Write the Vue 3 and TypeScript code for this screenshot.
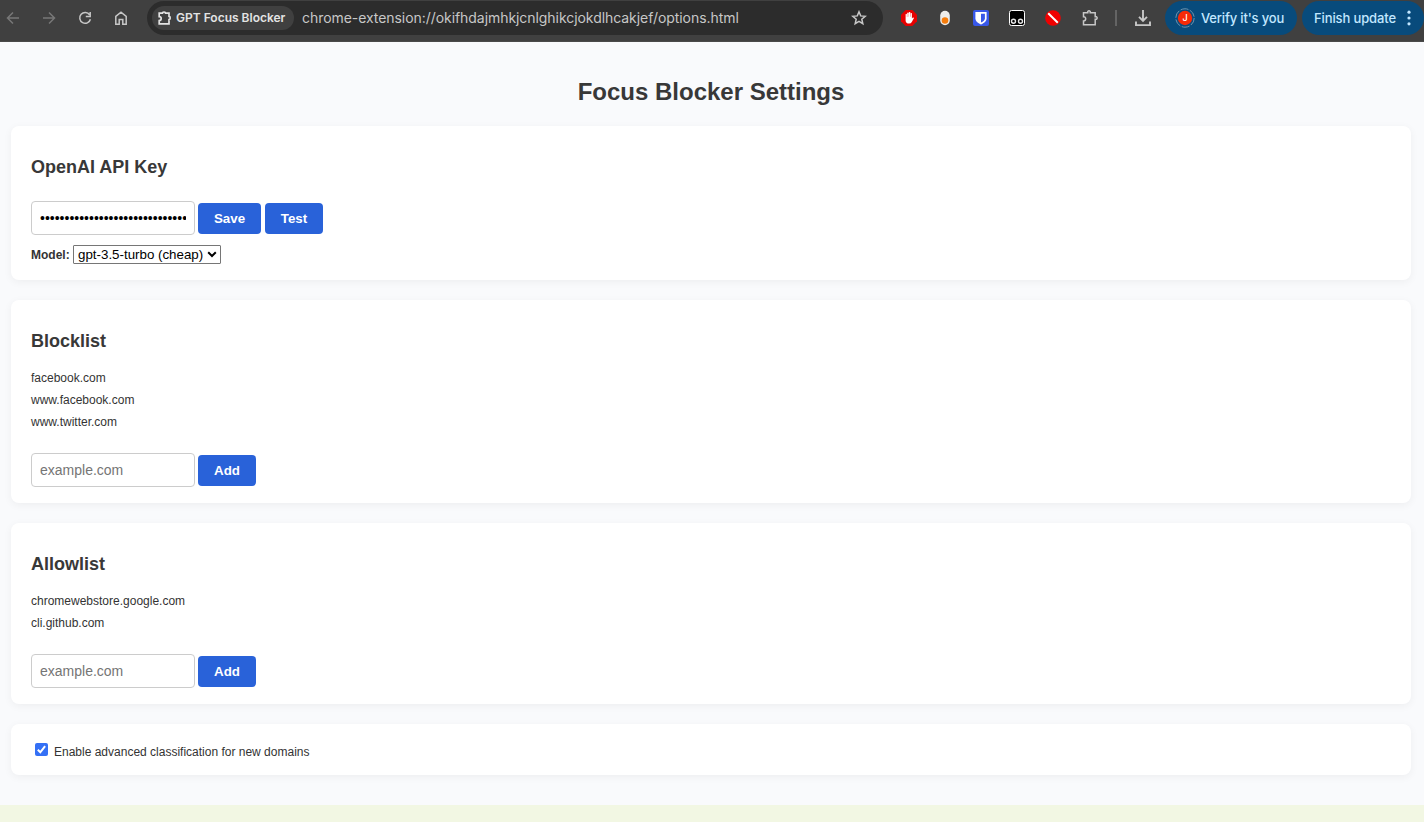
<script setup lang="ts">
import { ref } from 'vue'

const apiKey = ref('sk-0000000000000000000000000000000000')
const model = ref('gpt-3.5-turbo')
const advanced = ref(true)
const blockInput = ref('')
const allowInput = ref('')
const blocklist = ref<string[]>(['facebook.com', 'www.facebook.com', 'www.twitter.com'])
const allowlist = ref<string[]>(['chromewebstore.google.com', 'cli.github.com'])

function addBlock(): void {
  if (blockInput.value) blocklist.value.push(blockInput.value)
  blockInput.value = ''
}
function addAllow(): void {
  if (allowInput.value) allowlist.value.push(allowInput.value)
  allowInput.value = ''
}
</script>

<template>
  <div class="window">
    <header class="toolbar">
      <nav class="nav">
        <svg class="dim" width="16" height="16" viewBox="0 0 16 16"><path d="M14 8H3M8 2.5 2.5 8 8 13.5" /></svg>
        <svg class="dim" width="16" height="16" viewBox="0 0 16 16"><path d="M2 8h11M8 2.5 13.5 8 8 13.5" /></svg>
        <svg width="16" height="16" viewBox="0 0 16 16"><path d="M12.6 4.8A5.4 5.4 0 1 0 13.4 9.2M13.2 2v4.4H8.8" /></svg>
        <svg width="16" height="16" viewBox="0 0 16 16"><path d="M2.8 6.3 8 2.2l5.2 4.1v8H9.8V9.5H6.2v4.8H2.8Z" /></svg>
      </nav>
      <div class="omnibox">
        <span class="chip">
          <svg width="16" height="16" viewBox="0 0 16 16"><path class="bold" d="M2.2 3.2H5.4a1.6 1.2 0 0 1 3.2 0H12V6.4a1.2 1.6 0 0 1 0 3.2V13.8H2.2V10.6a2 2 0 0 0 0-4Z" /></svg>
          <span class="chip-text">GPT Focus Blocker</span>
        </span>
        <span class="url">chrome-extension://okifhdajmhkjcnlghikcjokdlhcakjef/options.html</span>
        <svg class="star" width="16" height="16" viewBox="0 0 16 16"><path d="m8 1.8 1.7 4.1 4.5.4-3.4 2.9 1 4.4L8 11.3l-3.8 2.3 1-4.4L1.8 6.3l4.5-.4Z" /></svg>
      </div>
      <div class="extensions">
        <svg width="16" height="16" viewBox="0 0 16 16">
          <path class="solid" fill="#e60000" d="M4.7 0h6.6L16 4.7v6.6L11.3 16H4.7L0 11.3V4.7Z" />
          <path class="solid" fill="#fff" d="M4.6 8V4.2q.7-.8 1.3 0V7h.3V3q.7-.8 1.4 0v3.7h.2V2.3q.8-.8 1.5 0v4.4h.3V3.3q.7-.7 1.3 0v5.3l1-1.1q.9-.3 1.1.4l-2.2 4Q10 13.6 8.2 13.6 4.6 13.6 4.6 10.5Z" />
        </svg>
        <svg width="16" height="16" viewBox="0 0 16 16">
          <rect class="solid" x="3.2" y=".8" width="9.6" height="14.4" rx="4.8" fill="#ededeb" />
          <circle class="solid" cx="8" cy="10.5" r="3.3" fill="#f57c0b" />
        </svg>
        <svg width="16" height="16" viewBox="0 0 16 16">
          <rect class="solid" width="16" height="16" rx="2" fill="#3858e9" />
          <path class="solid" fill="#fff" d="M2.4 2h11.2v6.3c0 3-2.5 4.8-5.6 6.3-3.1-1.5-5.6-3.3-5.6-6.3Z" />
          <path class="solid" fill="#3858e9" d="M8 3.7h3.9v4.5c0 2-1.6 3.2-3.9 4.4Z" />
        </svg>
        <svg width="16" height="16" viewBox="0 0 16 16">
          <rect class="tile" x=".5" y=".5" width="15" height="15" rx="2" />
          <circle class="ring" cx="4.5" cy="11.2" r="2" /><circle class="ring" cx="11.5" cy="11.2" r="2" />
        </svg>
        <svg width="16" height="16" viewBox="0 0 16 16">
          <circle class="solid" cx="8" cy="8" r="7.8" fill="#f00000" />
          <path class="slash" d="m3.2 3.2 9.6 9.6" />
        </svg>
        <svg width="18" height="18" viewBox="0 0 18 18"><path d="M2.5 3.8H6.8V2.4q1.2-1.4 2.4 0v1.4h5v4h1.3q1.3 1.2 0 2.4h-1.3v5.6H2.5V11.9q2.2 0 2.2-2.1T2.5 7.7Z" /></svg>
      </div>
      <i class="divider"></i>
      <svg class="download" width="18" height="18" viewBox="0 0 18 18"><path class="heavy" d="M9 1v10.5M5 7.8l4 4 4-4M2 12.5v3.6h14v-3.6" /></svg>
      <div class="pill verify">
        <svg width="20" height="20" viewBox="0 0 20 20">
          <circle class="orbit" cx="10" cy="10" r="9.2" />
          <circle class="solid" cx="10" cy="10" r="7.2" fill="#f52a08" />
          <text x="10" y="13" text-anchor="middle">J</text>
        </svg>
        <span class="verify-text">Verify it's you</span>
      </div>
      <div class="pill update">
        <span class="update-text">Finish update</span>
        <svg width="4" height="16" viewBox="0 0 4 16"><g fill="#c2e7ff"><circle class="solid" cx="2" cy="2.2" r="1.6" /><circle class="solid" cx="2" cy="8" r="1.6" /><circle class="solid" cx="2" cy="13.8" r="1.6" /></g></svg>
      </div>
    </header>

    <main class="page">
      <h1>Focus Blocker Settings</h1>
      <section class="card key-card">
        <h2>OpenAI API Key</h2>
        <div class="row">
          <input v-model="apiKey" type="password" class="field" />
          <button class="btn wide">Save</button>
          <button class="btn">Test</button>
        </div>
        <div class="model">
          <label for="model">Model:</label>
          <div class="select">
            <select id="model" v-model="model"><option value="gpt-3.5-turbo">gpt-3.5-turbo (cheap)</option></select>
            <svg width="10" height="7" viewBox="0 0 10 7"><path d="m1.2 1.2 3.8 3.8 3.8-3.8" /></svg>
          </div>
        </div>
      </section>

      <section class="card block-card">
        <h2>Blocklist</h2>
        <ul><li v-for="site in blocklist" :key="site">{{ site }}</li></ul>
        <div class="row">
          <input v-model="blockInput" type="text" class="field" placeholder="example.com" />
          <button class="btn" @click="addBlock">Add</button>
        </div>
      </section>

      <section class="card allow-card">
        <h2>Allowlist</h2>
        <ul><li v-for="site in allowlist" :key="site">{{ site }}</li></ul>
        <div class="row">
          <input v-model="allowInput" type="text" class="field" placeholder="example.com" />
          <button class="btn" @click="addAllow">Add</button>
        </div>
      </section>

      <section class="card toggle-card">
        <label class="toggle">
          <input v-model="advanced" type="checkbox" />
          <svg v-if="advanced" width="13" height="13" viewBox="0 0 13 13"><path d="m2.8 6.8 2.5 2.5 4.8-6.2" /></svg>
          <span>Enable advanced classification for new domains</span>
        </label>
      </section>
    </main>
    <footer class="strip"></footer>
  </div>
</template>

<style>
body { margin: 0; overflow: hidden; }
</style>

<style scoped>
.window { box-sizing: border-box; width: 1424px; height: 822px; display: flex; flex-direction: column; overflow: hidden; background: #f9fafc; color: #333; font: 12px "Liberation Sans", Arial, sans-serif; }
.window * { box-sizing: border-box; }
svg { display: block; flex: none; }

.toolbar { flex: none; height: 42px; padding-bottom: 6px; display: flex; align-items: center; background: #404040; border-bottom: 1px solid #4a4a4a; font-family: Inter, Roboto, sans-serif; white-space: nowrap; }
.toolbar svg path:not(.solid) { fill: none; stroke: #c7c7c7; stroke-width: 1.5; }
.nav { display: flex; gap: 20px; width: 147px; padding-left: 5px; }
.toolbar .nav .dim path:not(.solid) { stroke: #777; }
.omnibox { display: flex; align-items: center; width: 736px; height: 34px; margin-top: 1px; padding-left: 5px; border-radius: 17px; background: #2c2c2c; }
.chip { display: flex; align-items: center; flex: none; width: 142px; height: 24px; padding-left: 5px; border-radius: 12px; background: #404040; }
.toolbar .chip path.bold:not(.solid) { stroke-width: 1.7; stroke: #e3e3e3; }
.chip-text { margin: 0 0 2px 3px; font-size: 12px; font-weight: 600; color: #e3e3e3; }
.url { width: 549px; margin: 0 0 2px 8px; font-size: 14px; letter-spacing: -.058px; color: #c7c7c7; }
.extensions { display: flex; align-items: center; gap: 20px; margin-left: 18px; }
.tile { fill: #000; stroke: #fff; stroke-width: 1; }
.ring { fill: #000; stroke: #e6e6e6; stroke-width: 1.4; }
.toolbar svg path.slash:not(.solid) { stroke: #fff; stroke-width: 2; }
.divider { width: 2px; height: 16px; margin-left: 16px; background: #646464; }
.download { margin-left: 17px; }
.toolbar svg path.heavy:not(.solid) { stroke-width: 1.9; }
.pill { display: flex; align-items: center; flex: none; height: 34px; margin-top: 1px; border-radius: 17px; background: #084b7c; color: #c2e7ff; font-size: 13px; font-weight: 500; }
.verify { width: 132px; margin-left: 13px; padding-left: 10px; }
.orbit { fill: none; stroke: #6f93ad; stroke-width: 1; stroke-dasharray: 8 1.63; }
.pill text { font: 500 9px Inter, sans-serif; fill: #fff; }
.verify-text { margin-left: 6px; letter-spacing: -.17px; }
.update { width: 122px; margin-left: 5px; padding-left: 12px; }
.update-text { width: 93px; letter-spacing: -.12px; }

.page { flex: none; width: 1400px; height: 763px; margin-left: 11px; display: flex; flex-direction: column; }
h1 { height: 28px; margin: 36px 0 20px; font-size: 24px; line-height: 28px; text-align: center; color: #383838; }
.card { flex: none; margin-bottom: 20px; padding: 30px 20px 0; border-radius: 8px; background: #fff; box-shadow: 0 2px 8px rgba(0, 0, 0, .05); }
.key-card { height: 154px; }
.block-card { height: 203px; }
.allow-card { height: 181px; }
.toggle-card { height: 51px; padding: 19px 24px 0; margin-bottom: 0; }
h2 { height: 22px; margin: 0; font-size: 18px; line-height: 22px; color: #383838; }
.row { display: flex; align-items: center; }
.key-card .row { margin-top: 23px; }
.field { width: 164px; height: 34px; margin: 0 3px 0 0; padding: 0 8px; border: 1px solid #ccc; border-radius: 4px; background: #fff; font: 14px "Liberation Sans", Arial, sans-serif; color: #000; outline: none; }
.field::placeholder { color: #757575; opacity: 1; }
.btn { width: 58px; height: 31px; margin: 1px 4px 0 0; padding: 0; border: 0; border-radius: 4px; background: #2962d9; color: #fff; font: bold 13.333px "Liberation Sans", Arial, sans-serif; }
.btn.wide { width: 63px; }
.model { display: flex; align-items: center; height: 19px; margin-top: 10px; font-weight: bold; }
.model label { width: 42px; }
.select { position: relative; width: 148px; height: 19px; }
.select select { display: block; width: 148px; height: 19px; padding: 0 0 0 4px; appearance: none; border: 1px solid #767676; border-radius: 1px; background: #fff; color: #000; font: 13.333px "Liberation Sans", Arial, sans-serif; }
.select svg { position: absolute; right: 4px; top: 6px; pointer-events: none; }
.select path { fill: none; stroke: #000; stroke-width: 2; }
ul { margin: 15px 0 20px; padding: 0; list-style: none; }
li { height: 22px; line-height: 22px; }
.toggle { position: relative; display: flex; align-items: flex-start; }
.toggle input { appearance: none; width: 13px; height: 13px; margin: 0 6px 0 0; border-radius: 2px; background: #3470f5; }
.toggle svg { position: absolute; left: 0; top: 0; }
.toggle path { fill: none; stroke: #fff; stroke-width: 2; }
.toggle span { line-height: 18px; }
.strip { flex: 1; background: #f2f7e3; }
</style>
